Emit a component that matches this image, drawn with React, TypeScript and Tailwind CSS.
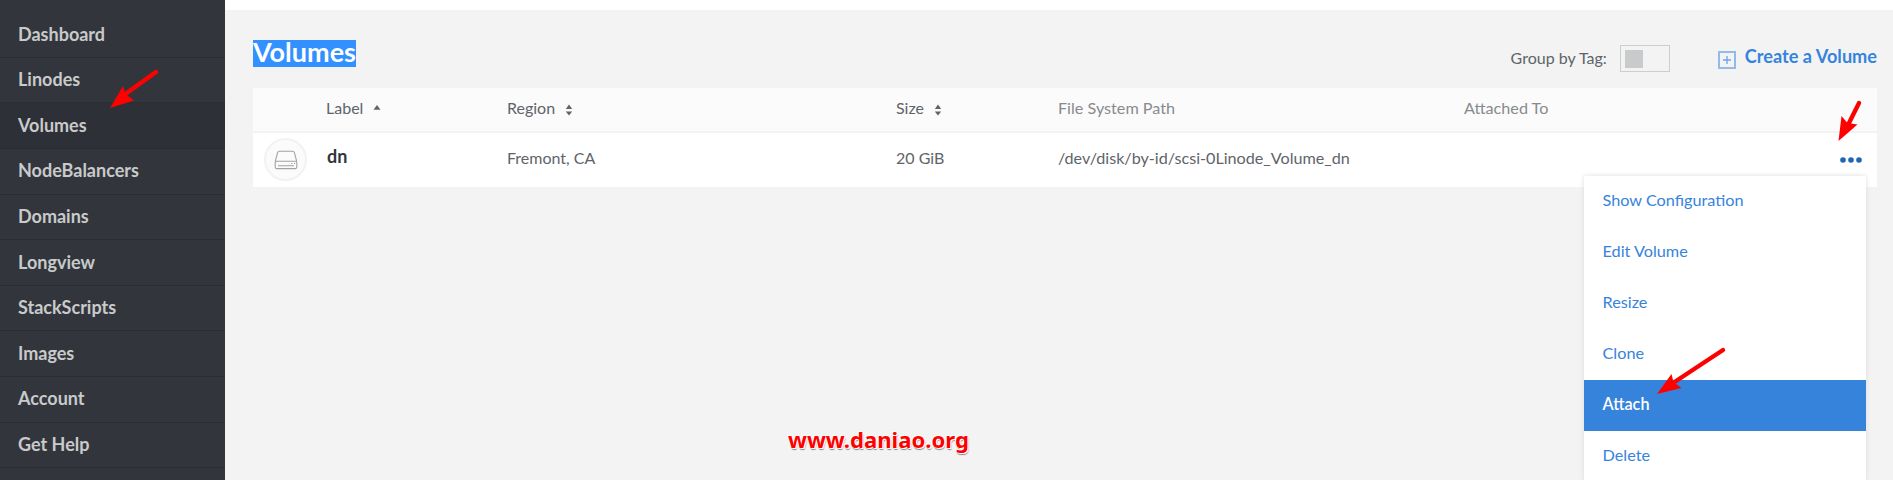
import React from "react";

const navItems = [
  "Dashboard",
  "Linodes",
  "Volumes",
  "NodeBalancers",
  "Domains",
  "Longview",
  "StackScripts",
  "Images",
  "Account",
  "Get Help",
];

const menuItems = ["Show Configuration", "Edit Volume", "Resize", "Clone", "Attach", "Delete"];

function Sidebar() {
  return (
    <nav className="w-[225px] shrink-0 overflow-hidden bg-[#32363c] pt-[12.3px]">
      {navItems.map((item) => (
        <a
          key={item}
          className={
            "flex h-[45.6px] items-center border-b border-[#2b2d35] pb-[2px] pl-[18px] text-[18px] leading-[22px] font-bold text-[#c9cacb] " +
            (item === "Volumes" ? "bg-[#2d3036]" : "")
          }
        >
          {item}
        </a>
      ))}
    </nav>
  );
}

function SortBoth() {
  return (
    <svg className="mt-[3px] ml-[10px]" width="8" height="12" viewBox="0 0 8 12" fill="#606469">
      <path d="M4 0.5 7.2 5H0.8zM4 11.5 0.8 7.5H7.2z" />
    </svg>
  );
}

function SortUp() {
  return (
    <svg className="mb-[2px] ml-[10px]" width="8" height="5" viewBox="0 0 8 5" fill="#606469">
      <path d="M4 0 7.5 4.8H0.5z" />
    </svg>
  );
}

function VolumeIcon() {
  return (
    <div className="flex size-[43px] items-center justify-center rounded-full border-2 border-[#f2f2f2] bg-[#fbfbfb]">
      <svg className="mt-px" width="24" height="20" viewBox="0 0 24 20" fill="none" stroke="#a0a2a5" strokeWidth="1.1">
        <path d="M1.2 11.6 3.6 2.6Q4 1.3 5.4 1.3H18.6Q20 1.3 20.4 2.6L22.8 11.6" />
        <rect x="1.2" y="11.2" width="21.6" height="7.4" rx="1.5" />
        <path d="M4 15.8H20M17.3 13.5h1.2M20 13.5h1.2" />
      </svg>
    </div>
  );
}

function Arrow({ className, w, h, shaft, head }: { className: string; w: number; h: number; shaft: string; head: string }) {
  return (
    <svg className={"pointer-events-none absolute " + className} width={w} height={h} viewBox={`0 0 ${w} ${h}`}>
      <path d={shaft} stroke="#fe0000" strokeWidth="4.4" strokeLinecap="round" />
      <path d={head} fill="#fe0000" />
    </svg>
  );
}

function ActionMenu() {
  return (
    <div className="absolute top-[176px] left-[1584px] w-[282px] bg-white shadow-[0_0_5px_#dddddd]">
      {menuItems.map((item) => (
        <div
          key={item}
          className={
            "flex h-[51px] items-center pb-[3px] pl-[18.5px] text-[16.25px] leading-[20px] " +
            (item === "Attach" ? "bg-[#3683dc] font-semibold text-white" : "text-[#3683dc]")
          }
        >
          {item}
        </div>
      ))}
    </div>
  );
}

const cols = "grid grid-cols-[73px_181px_389px_162px_406px_1fr]";

export default function App() {
  return (
    <div className="relative flex h-[480px] w-[1893px] overflow-hidden bg-[#f3f3f3] font-['Lato',sans-serif]">
      <Sidebar />
      <main className="flex grow flex-col">
        <div className="h-[10px] bg-white" />
        <div className="flex h-[78px] items-start justify-between pr-4 pl-7">
          <h1 className="mt-[30px] h-[27px] w-[103px] bg-[#3290ff] text-[27px] leading-[23px] font-bold whitespace-nowrap text-white">Volumes</h1>
          <div className="flex items-start">
            <span className="mt-[38px] text-[16px] leading-[20px] text-[#606469]">Group by Tag:</span>
            <span className="mt-[35px] ml-[13px] flex h-[27px] w-[50px] border border-[#cccdce] p-1">
              <span className="size-[18px] bg-[#c9cacc]" />
            </span>
            <svg className="mt-[41px] ml-[48px]" width="18" height="18" viewBox="0 0 18 18" fill="none" stroke="#94b9eb">
              <path d="M1 1H17V17H1z" strokeWidth="2" />
              <path d="M9 5V13M5 9H13" stroke="#6fa4e6" strokeWidth="1.3" />
            </svg>
            <a className="mt-[35px] ml-[9px] text-[18.15px] leading-[22px] font-bold text-[#3683dc]">Create a Volume</a>
          </div>
        </div>
        <section className="mr-4 ml-7 text-[16px] leading-[20px] text-[#606469]">
          <div className={cols + " h-[45px] items-center border-b-2 border-[#f3f3f3] bg-[#fbfbfb] pb-[3px]"}>
            <span />
            <span className="flex items-center">Label<SortUp /></span>
            <span className="flex items-center">Region<SortBoth /></span>
            <span className="flex items-center">Size<SortBoth /></span>
            <span className="text-[16.2px] text-[#888b8e]">File System Path</span>
            <span className="text-[16.2px] text-[#888b8e]">Attached To</span>
          </div>
          <div className={cols + " h-[54px] items-center bg-white pb-[2px]"}>
            <span className="pl-[11px]"><VolumeIcon /></span>
            <span className="pb-[7px] pl-px text-[18px] font-bold text-[#32363c]">dn</span>
            <span className="pb-[3px]">Fremont, CA</span>
            <span className="pb-[3px]">20 GiB</span>
            <span className="pb-[3px] text-[16.17px]">/dev/disk/by-id/scsi-0Linode_Volume_dn</span>
            <span className="flex justify-end pt-[2px] pr-[15px]">
              <svg width="22" height="6" viewBox="0 0 22 6" fill="#1f64b6">
                <circle cx="3" cy="3" r="2.8" />
                <circle cx="11" cy="3" r="2.8" />
                <circle cx="19" cy="3" r="2.8" />
              </svg>
            </span>
          </div>
        </section>
      </main>
      <ActionMenu />
      <Arrow className="top-[68px] left-[108px]" w={52} h={42} shaft="M48 4 16 27" head="M2 40 15 18 17.5 26 26 32.5z" />
      <Arrow className="top-[99px] left-[1836px]" w={28} h={44} shaft="M23 4 12 26" head="M2.5 42 5.5 17 11.5 24 21.5 25.5z" />
      <Arrow className="top-[346px] left-[1655px]" w={72} h={52} shaft="M68 4 18 37" head="M2 48 16.5 28 18.5 36 26.5 42z" />
      <div className="absolute top-[425px] left-[788px] font-['Noto_Sans',sans-serif] text-[22.1px] leading-[28px] font-bold text-[#fe0000] [text-shadow:0_0_1px_white,1px_1px_0_white,-1px_-1px_0_white,1px_2px_1px_#888888]">
        www.daniao.org
      </div>
    </div>
  );
}
